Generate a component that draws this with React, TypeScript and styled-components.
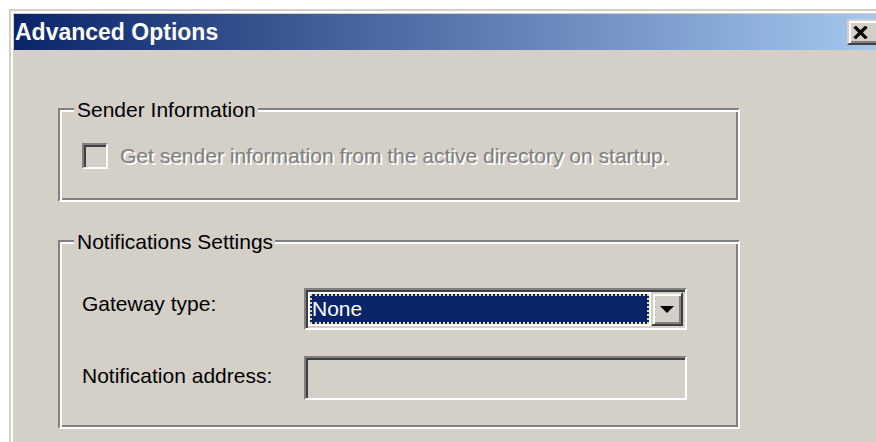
import React from 'react';
import styled, { createGlobalStyle, css } from 'styled-components';

// classic 3D control palette
const face = '#d4d0c8';
const shadow = '#808080';
const darkShadow = '#404040';
const highlight = '#ffffff';

const GlobalStyle = createGlobalStyle`
  html, body {
    margin: 0;
    padding: 0;
    background: #fff;
    overflow: hidden;
  }
  body {
    font-family: "Liberation Sans", Arial, sans-serif;
  }
`;

const sunken = css`
  box-sizing: border-box;
  border: 2px solid;
  border-color: ${shadow} ${highlight} ${highlight} ${shadow};
  box-shadow: inset 2px 2px 0 ${darkShadow}, inset -2px -2px 0 ${face};
`;

const raised = css`
  box-sizing: border-box;
  border: 2px solid;
  border-color: ${face} ${darkShadow} ${darkShadow} ${face};
  box-shadow: inset 2px 2px 0 ${highlight}, inset -2px -2px 0 ${shadow};
  background: ${face};
`;

const Frame = styled.div`
  margin: 9px 0 0 9px;
  width: 880px;
  height: 433px;
  box-sizing: border-box;
  border-top: 2px solid ${face};
  border-left: 2px solid ${face};
  background: ${face};
`;

const FrameInner = styled.div`
  height: 100%;
  box-sizing: border-box;
  border-top: 2px solid ${highlight};
  border-left: 2px solid ${highlight};
  padding: 1px 0 0 1px;
`;

const TitleBar = styled.div`
  height: 36px;
  display: flex;
  align-items: center;
  padding: 0 6px 0 1px;
  background: linear-gradient(to right, #0a246a, #a6caf0);
`;

const Caption = styled.span`
  flex: 1;
  color: #fff;
  font-weight: bold;
  font-size: 23px;
  line-height: 36px;
  white-space: nowrap;
`;

const CloseButton = styled.div`
  ${raised};
  width: 36px;
  height: 26px;
  padding: 4px 0 0 4px;
`;

const Content = styled.div`
  padding: 58px 0 0 44px;
  display: flex;
  flex-direction: column;
  gap: 38px;
`;

const GroupBox = styled.div<{ $bottom: number }>`
  width: 682px;
  box-sizing: border-box;
  border: 2px solid ${shadow};
  border-right-color: ${highlight};
  border-bottom-color: ${highlight};
  box-shadow: inset 2px 2px 0 ${highlight}, inset -2px -2px 0 ${shadow};
  padding: 2px 22px ${(p) => p.$bottom}px 22px;
`;

const Legend = styled.div`
  width: fit-content;
  margin: -14px 0 0 -8px;
  padding: 0 2px 0 3px;
  background: ${face};
  color: #000;
  font-size: 21px;
  line-height: 24px;
  white-space: nowrap;
`;

const CheckRow = styled.div`
  margin-top: 21px;
  display: flex;
  align-items: center;
  gap: 12px;
`;

const CheckBox = styled.div`
  ${sunken};
  width: 26px;
  height: 26px;
  background: ${face};
`;

const DisabledLabel = styled.span`
  color: ${shadow};
  text-shadow: 2px 2px 0 ${highlight};
  font-size: 21px;
  line-height: 24px;
  white-space: nowrap;
`;

const FieldGrid = styled.div`
  margin-top: 34px;
  display: grid;
  grid-template-columns: 222px 383px;
  row-gap: 26px;
`;

const FieldLabel = styled.div<{ $offset: number }>`
  margin-top: ${(p) => p.$offset}px;
  color: #000;
  font-size: 21px;
  line-height: 24px;
  white-space: nowrap;
`;

const ComboBox = styled.div`
  ${sunken};
  height: 42px;
  padding: 2px;
  display: flex;
  background: #fff;
`;

const Selection = styled.div`
  flex: 1;
  margin: 2px;
  border: 2px dotted #efd98f;
  background: #0a246a;
  color: #fff;
  font-size: 21px;
  line-height: 26px;
`;

const DropButton = styled.div`
  ${raised};
  width: 32px;
  display: flex;
  align-items: center;
  justify-content: center;
`;

const EditBox = styled.div`
  ${sunken};
  height: 44px;
  background: ${face};
`;

const CloseGlyph = () => (
  <svg width="15" height="13" viewBox="0 0 15 13">
    <path d="M1.5 0.5 L13.5 12.5 M13.5 0.5 L1.5 12.5" stroke="#000" strokeWidth="3.2" />
  </svg>
);

const Arrow = () => (
  <svg width="14" height="7" viewBox="0 0 14 7">
    <polygon points="0,0 14,0 7,7" fill="#000" />
  </svg>
);

const App: React.FC = () => {
  return (
    <>
      <GlobalStyle />
      <Frame>
        <FrameInner>
          <TitleBar>
            <Caption>Advanced Options</Caption>
            <CloseButton>
              <CloseGlyph />
            </CloseButton>
          </TitleBar>
          <Content>
            <GroupBox $bottom={31}>
              <Legend>Sender Information</Legend>
              <CheckRow>
                <CheckBox />
                <DisabledLabel>
                  Get sender information from the active directory on startup.
                </DisabledLabel>
              </CheckRow>
            </GroupBox>
            <GroupBox $bottom={27}>
              <Legend>Notifications Settings</Legend>
              <FieldGrid>
                <FieldLabel $offset={4}>Gateway type:</FieldLabel>
                <ComboBox>
                  <Selection>None</Selection>
                  <DropButton>
                    <Arrow />
                  </DropButton>
                </ComboBox>
                <FieldLabel $offset={8}>Notification address:</FieldLabel>
                <EditBox />
              </FieldGrid>
            </GroupBox>
          </Content>
        </FrameInner>
      </Frame>
    </>
  );
};

export default App;
